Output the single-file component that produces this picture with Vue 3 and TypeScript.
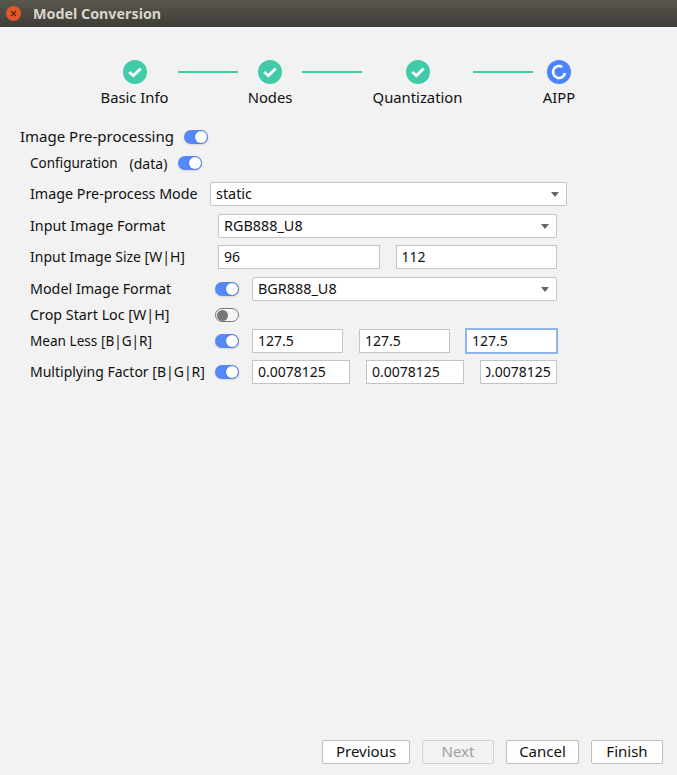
<script setup lang="ts">
const steps = [
  { name: 'Basic Info', done: true },
  { name: 'Nodes', done: true },
  { name: 'Quantization', done: true },
  { name: 'AIPP', done: false },
]
const buttons = [
  { label: 'Previous', cls: 'b-prev', disabled: false },
  { label: 'Next', cls: 'b-next', disabled: true },
  { label: 'Cancel', cls: 'b-cancel', disabled: false },
  { label: 'Finish', cls: 'b-finish', disabled: false },
]
</script>

<template>
  <div class="window">
    <div class="titlebar">
      <span class="close">
        <svg width="7" height="7" viewBox="0 0 7 7"><path d="M1 1l5 5M6 1l-5 5" stroke="#5a2412" stroke-width="1.2" fill="none" /></svg>
      </span>
      <span class="title">Model Conversion</span>
    </div>

    <div class="stepper">
      <template v-for="(s, i) in steps" :key="s.name">
        <div v-if="i > 0" class="line"></div>
        <div class="step">
          <svg v-if="s.done" width="24" height="24" viewBox="0 0 24 24">
            <circle cx="12" cy="12" r="12" fill="#41cca9" />
            <path d="M6.2 12l4.2 3.6 7.4-7.2" stroke="#fff" stroke-width="2.8" fill="none" />
          </svg>
          <svg v-else width="24" height="24" viewBox="0 0 24 24">
            <circle cx="12" cy="12" r="12" fill="#4c84ff" />
            <path d="M15.2 6.9A6 6 0 1 0 18 13" stroke="#fff" stroke-width="2.6" fill="none" />
          </svg>
          <span class="step-name">{{ s.name }}</span>
        </div>
      </template>
    </div>

    <div class="form">
      <div class="head">
        <span class="head-label">Image Pre-processing</span>
        <span class="toggle on"></span>
      </div>
      <div class="sub">
        <span>Configuration</span>
        <span class="data">(data)</span>
        <span class="toggle on"></span>
      </div>

      <div class="row r-mode">
        <label class="lbl lbl-mode wide">Image Pre-process Mode</label>
        <div class="select grow"><span>static</span><i class="caret"></i></div>
      </div>
      <div class="row r-gap8 inset">
        <label class="lbl lbl-188 wide">Input Image Format</label>
        <div class="select grow"><span>RGB888_U8</span><i class="caret"></i></div>
      </div>
      <div class="row r-gap7 inset size-row">
        <label class="lbl lbl-188">Input Image Size [W|H]</label>
        <input class="field grow" value="96" />
        <input class="field grow" value="112" />
      </div>
      <div class="row r-gap8 inset">
        <label class="lbl lbl-185 wide">Model Image Format</label>
        <span class="toggle on t-slot"></span>
        <div class="select grow"><span>BGR888_U8</span><i class="caret"></i></div>
      </div>
      <div class="row r-gap2 inset">
        <label class="lbl lbl-185 wide">Crop Start Loc [W|H]</label>
        <span class="toggle off"></span>
      </div>
      <div class="row r-gap2 inset triple">
        <label class="lbl lbl-185 narrow">Mean Less [B|G|R]</label>
        <span class="toggle on t-slot"></span>
        <input class="field grow" value="127.5" />
        <input class="field grow" value="127.5" />
        <input class="field grow focus" value="127.5" />
      </div>
      <div class="row r-gap7 inset factor">
        <label class="lbl lbl-185">Multiplying Factor [B|G|R]</label>
        <span class="toggle on t-slot"></span>
        <input class="field f-wide" value="0.0078125" />
        <input class="field f-wide" value="0.0078125" />
        <input class="field f-last" value="0.0078125" />
      </div>
    </div>

    <div class="footer">
      <button v-for="b in buttons" :key="b.label" :class="['btn', b.cls]" :disabled="b.disabled">{{ b.label }}</button>
    </div>
  </div>
</template>

<style>
html, body { margin: 0; background: #f2f2f2; }
</style>

<style scoped>
.window {
  width: 677px;
  height: 775px;
  display: flex;
  flex-direction: column;
  background: #f2f2f2;
  color: #111;
  font-family: "Noto Sans", sans-serif;
  font-size: 14px;
  overflow: hidden;
}

.titlebar {
  height: 27px;
  display: flex;
  align-items: center;
  padding-left: 6px;
  background: linear-gradient(#5a574e, #3e3c37);
}
.close {
  width: 15px;
  height: 15px;
  border-radius: 50%;
  background: #e2582b;
  display: flex;
  align-items: center;
  justify-content: center;
}
.title {
  margin-left: 12px;
  color: #d9d5cc;
  font-weight: 700;
  font-size: 14.3px;
}

.stepper {
  margin-top: 33px;
  display: grid;
  grid-template-columns: 67px 60px 44px 60px 91px 60px 32px;
  column-gap: 10px;
  padding-left: 101px;
}
.step {
  display: flex;
  flex-direction: column;
  align-items: center;
}
.step svg { display: block; }
.step-name {
  margin-top: 3px;
  margin-bottom: 1px;
  line-height: 20px;
  font-size: 14.8px;
  white-space: nowrap;
}
.line {
  height: 2px;
  margin-top: 11px;
  background: #41cca9;
}

.form {
  margin-top: 17px;
  padding-left: 20px;
}
.head {
  height: 24px;
  display: flex;
  align-items: center;
}
.head-label { font-size: 15px; padding-bottom: 2px; }
.head .toggle { margin-left: 10px; }
.sub {
  height: 24px;
  margin-top: 2px;
  padding-left: 10px;
  display: flex;
  align-items: center;
  font-size: 13.5px;
}
.data { margin-left: 12px; font-size: 14px; }
.sub .toggle { margin-left: 11px; }

.row {
  height: 24px;
  display: flex;
  align-items: center;
  padding-left: 10px;
}
.inset { width: 537px; box-sizing: border-box; }
.r-mode { margin-top: 7px; width: 547px; box-sizing: border-box; }
.r-gap8 { margin-top: 8px; }
.r-gap7 { margin-top: 7px; }
.r-gap2 { margin-top: 2px; }

.lbl { flex: none; white-space: nowrap; padding-bottom: 2px; }
.lbl.wide { font-size: 14.3px; }
.lbl.narrow { font-size: 13.6px; }
.lbl-mode { width: 180px; }
.lbl-188 { width: 188px; }
.lbl-185 { width: 185px; }

.grow { flex: 1 1 0; min-width: 0; }

.select {
  height: 24px;
  box-sizing: border-box;
  display: flex;
  align-items: center;
  justify-content: space-between;
  padding: 0 7px 2px 5px;
  background: #fff;
  border: 1px solid #c4c4c4;
  border-radius: 2px;
  font-size: 14.4px;
}
.caret {
  width: 0;
  height: 0;
  margin-top: 2px;
  border-left: 4px solid transparent;
  border-right: 4px solid transparent;
  border-top: 5px solid #666;
}

.field {
  height: 24px;
  box-sizing: border-box;
  padding: 0 5px 2px;
  background: #fff;
  border: 1px solid #c4c4c4;
  border-radius: 0;
  outline: none;
  color: #111;
  font: inherit;
}
.size-row .field + .field { margin-left: 16px; }
.triple .field + .field { margin-left: 16px; }
.t-slot { margin-right: 13px; }
.field.focus {
  border-color: #8db7e8;
  box-shadow: 0 0 0 1px #8db7e8;
}
.f-wide { width: 98px; flex: none; margin-right: 16px; }
.f-last { width: 77px; flex: none; text-indent: -3px; }

.toggle {
  position: relative;
  flex: none;
  display: block;
  width: 24px;
  height: 14px;
  box-sizing: border-box;
  border-radius: 7px;
}
.toggle::after {
  content: "";
  position: absolute;
  top: 1px;
  width: 12px;
  height: 12px;
  border-radius: 50%;
}
.toggle.on {
  background: #5588f8;
  box-shadow: 0 1px 2px rgba(0, 0, 0, 0.12);
}
.toggle.on::after {
  right: 1px;
  background: #fff;
  box-shadow: 0 0 2px rgba(0, 0, 0, 0.3);
}
.toggle.off {
  background: #f6f6f6;
  border: 1px solid #777;
}
.toggle.off::after {
  top: 0.5px;
  left: 0.5px;
  width: 11px;
  height: 11px;
  background: #777;
}

.footer {
  margin-top: auto;
  padding: 0 14px 11px 0;
  display: flex;
  justify-content: flex-end;
}
.btn {
  height: 24px;
  box-sizing: border-box;
  padding: 0 0 2px;
  background: #fff;
  border: 1px solid #bdbdbd;
  border-radius: 2px;
  color: #111;
  font: inherit;
  font-size: 15px;
}
.b-prev { width: 88px; }
.b-next { width: 72px; margin-left: 12px; background: #f2f2f2; border-color: #d2d2d2; color: #a0a0a0; }
.b-cancel { width: 73px; margin-left: 12px; }
.b-finish { width: 72px; margin-left: 12px; }
</style>
